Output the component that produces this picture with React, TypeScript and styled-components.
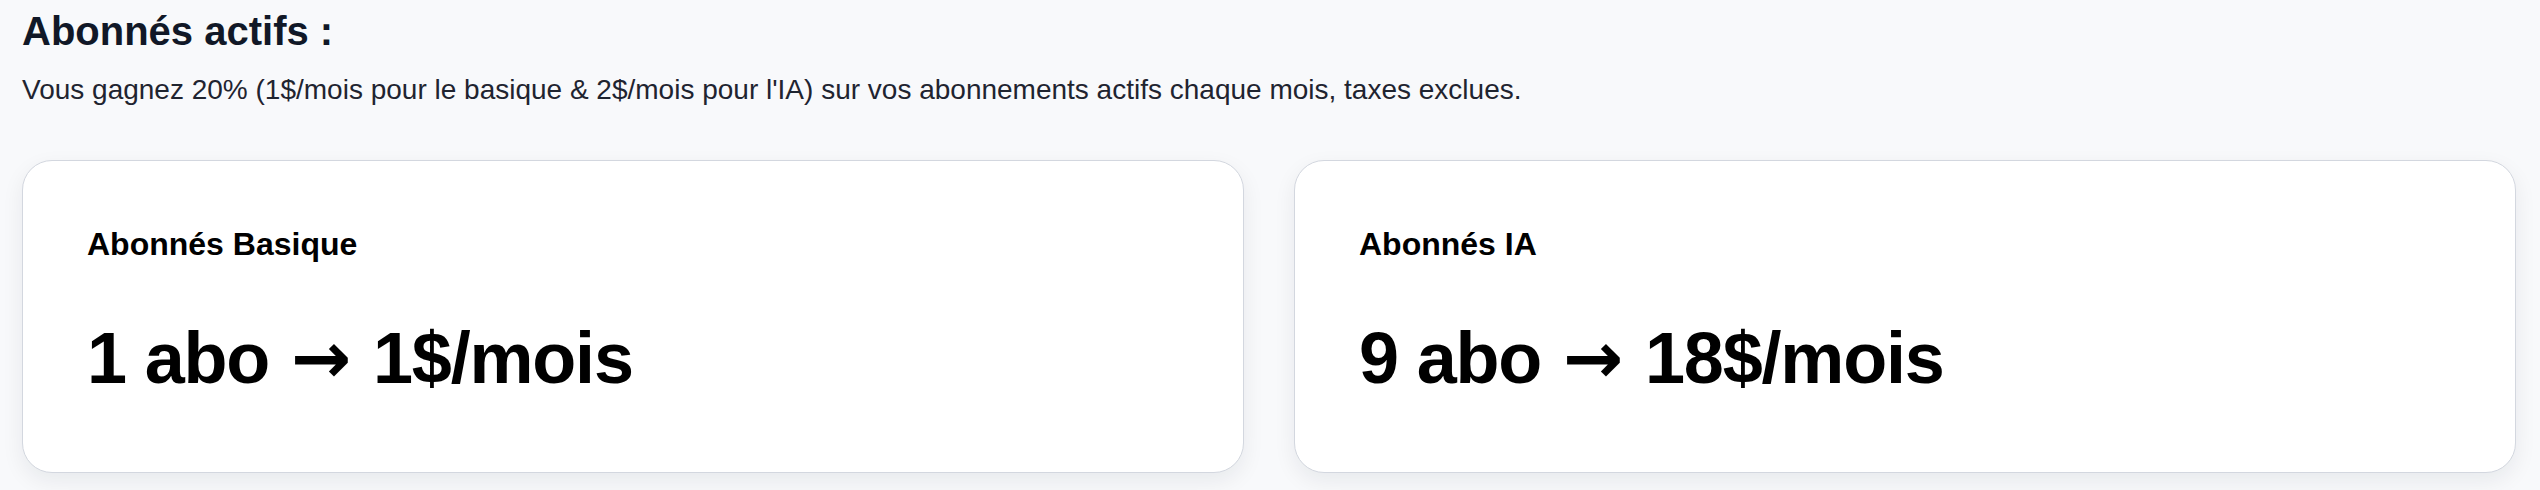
import React from "react";
import styled, { createGlobalStyle } from "styled-components";

const GlobalStyle = createGlobalStyle`
  html, body {
    margin: 0;
    padding: 0;
    background: #f8f9fb;
  }
  body {
    font-family: "Liberation Sans", Arial, Helvetica, sans-serif;
  }
`;

const Page = styled.main`
  box-sizing: border-box;
  width: 100%;
  min-height: 490px;
  padding: 7px 24px 0 22px;
  background: #f8f9fb;
`;

const Title = styled.h2`
  margin: 0;
  font-size: 40px;
  line-height: 48px;
  font-weight: 700;
  color: #111827;
`;

const Subtitle = styled.p`
  margin: 15px 0 0;
  font-size: 28px;
  line-height: 39px;
  font-weight: 400;
  color: #1f2430;
`;

const CardGrid = styled.section`
  display: grid;
  grid-template-columns: 1222px 1222px;
  column-gap: 50px;
  margin-top: 51px;
`;

const Card = styled.article`
  box-sizing: border-box;
  height: 313px;
  padding: 66px 64px 0;
  background: #ffffff;
  border: 1.5px solid #d3d7df;
  border-radius: 30px;
  box-shadow: 0 8px 22px rgba(17, 24, 39, 0.07);
  display: flex;
  flex-direction: column;
`;

const CardLabel = styled.h3`
  margin: 0;
  font-size: 32px;
  line-height: 35px;
  font-weight: 700;
  color: #000000;
`;

const CardValue = styled.div`
  margin-top: 53px;
  font-size: 72px;
  line-height: 86px;
  font-weight: 700;
  color: #000000;
  letter-spacing: -1.2px;
`;

const Arrow = styled.span`
  font-family: "DejaVu Sans", sans-serif;
  font-weight: 700;
  letter-spacing: 0;
  margin: 0 3px;
`;

const stats = [
  { label: "Abonnés Basique", from: "1 abo", to: "1$/mois" },
  { label: "Abonnés IA", from: "9 abo", to: "18$/mois" },
];

export default function App() {
  return (
    <>
      <GlobalStyle />
      <Page>
        <Title>Abonnés actifs :</Title>
        <Subtitle>
          Vous gagnez 20% (1$/mois pour le basique &amp; 2$/mois pour l'IA) sur vos abonnements actifs chaque mois, taxes exclues.
        </Subtitle>
        <CardGrid>
          {stats.map((s) => (
            <Card key={s.label}>
              <CardLabel>{s.label}</CardLabel>
              <CardValue>
                {s.from} <Arrow>→</Arrow> {s.to}
              </CardValue>
            </Card>
          ))}
        </CardGrid>
      </Page>
    </>
  );
}
